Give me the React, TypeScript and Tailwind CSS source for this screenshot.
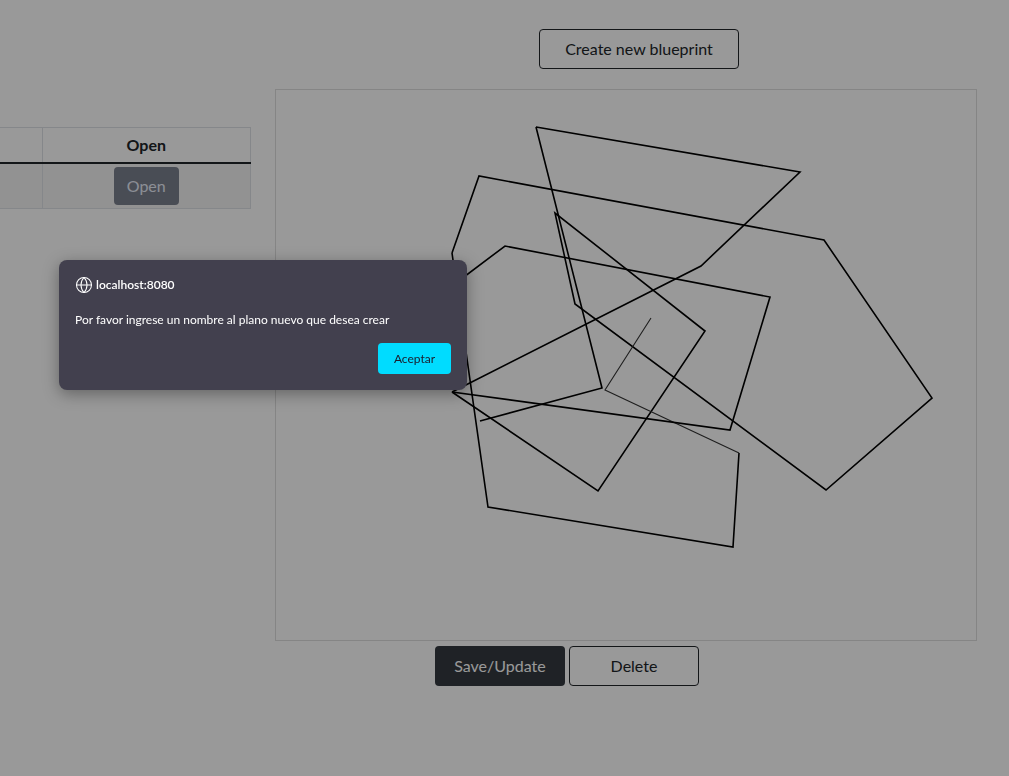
import { Globe } from "lucide-react";

// canvas drawing, coords relative to the 700x550 canvas
const strokes: { pts: [number, number][]; thin?: boolean }[] = [
  { pts: [[260, 37], [524, 82], [425, 176], [176, 302]] },
  { pts: [[260, 37], [326, 298], [204, 331]] },
  {
    pts: [
      [176, 163], [203, 86], [548, 150], [656, 308], [550, 400],
      [299, 214], [279, 123], [429, 241], [322, 401], [176, 302],
    ],
  },
  { pts: [[176, 163], [212, 417], [457, 457], [463, 363]] },
  { pts: [[463, 363], [329, 300], [375, 228]], thin: true },
  { pts: [[176, 302], [454, 340], [494, 207], [229, 156], [164, 205]] },
];

export default function App() {
  return (
    <div className="relative min-h-[776px] w-full overflow-hidden bg-white font-['Lato',sans-serif] text-[#212529]">
      <div className="flex">
        {/* Blueprints table */}
        <div className="w-[275px] shrink-0 pt-[127px]">
          <table className="w-[251px] border-collapse text-base">
            <thead>
              <tr className="h-[35px]">
                <th className="w-[42px] border border-l-0 border-[#dee2e6] border-b-2 border-b-[#212529]" />
                <th className="border border-[#dee2e6] border-b-2 border-b-[#212529] text-center font-bold">Open</th>
              </tr>
            </thead>
            <tbody>
              <tr className="h-[46px] bg-[#f3f3f3]">
                <td className="border border-l-0 border-[#dee2e6]" />
                <td className="border border-[#dee2e6] text-center">
                  <button className="h-[38px] w-[65px] rounded bg-[#7b808e] text-[#e9eef9]">Open</button>
                </td>
              </tr>
            </tbody>
          </table>
        </div>

        {/* Canvas column */}
        <div className="flex flex-col items-start pt-[29px]">
          <button className="ml-[264px] h-10 w-[200px] rounded border border-[#212529] text-base">
            Create new blueprint
          </button>
          <div className="mt-5 h-[552px] w-[702px] border border-[#dedede]">
            <svg width="700" height="550" viewBox="0 0 700 550">
              {strokes.map((s, i) => (
                <polyline
                  key={i}
                  points={s.pts.map((p) => p.join(",")).join(" ")}
                  fill="none"
                  stroke={s.thin ? "#333" : "#000"}
                  strokeWidth={s.thin ? 1.1 : 1.6}
                  strokeLinejoin="miter"
                />
              ))}
            </svg>
          </div>
          <div className="ml-[160px] mt-[5px] flex gap-[4px]">
            <button className="h-10 w-[130px] rounded bg-[#343a40] text-base text-white">Save/Update</button>
            <button className="h-10 w-[130px] rounded border border-[#212529] text-base">Delete</button>
          </div>
        </div>
      </div>

      {/* Modal backdrop */}
      <div className="fixed inset-0 bg-black/40" />

      {/* Alert dialog */}
      <div className="absolute left-[59px] top-[260px] flex h-[130px] w-[408px] flex-col rounded-lg bg-[#42404e] px-4 pt-[16px] pb-4 text-white shadow-[0_4px_16px_rgba(0,0,0,0.35)]">
        <div className="flex items-center gap-[3px] text-[12px] font-semibold leading-4">
          <Globe className="h-[18px] w-[18px]" strokeWidth={1.4} />
          <span>localhost:8080</span>
        </div>
        <p className="mt-[18px] text-[12px] leading-4">Por favor ingrese un nombre al plano nuevo que desea crear</p>
        <div className="mt-auto flex justify-end">
          <button className="h-[31px] w-[73px] rounded bg-[#00dcff] text-[12px] text-[#1b1b2a]">Aceptar</button>
        </div>
      </div>
    </div>
  );
}
